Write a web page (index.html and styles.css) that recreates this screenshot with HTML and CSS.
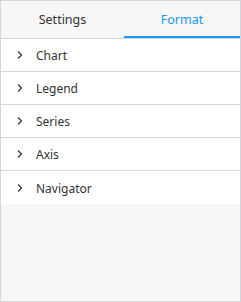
FILE: index.html
```html
<!DOCTYPE html>
<html lang="en">

<head>
  <meta charset="UTF-8" />
  <title>Chart Properties</title>
  <link rel="stylesheet" href="styles.css">
</head>

<body>
  <div class="panel">
    <div class="tabs">
      <div class="tab settings-tab">Settings</div>
      <div class="tab active">Format</div>
    </div>

    <div class="sections">
      <div class="section">
        <svg class="chevron" viewBox="0 0 8 10"><path d="M2 1.5 L5.5 5 L2 8.5" /></svg>
        <span>Chart</span>
      </div>
      <div class="section">
        <svg class="chevron" viewBox="0 0 8 10"><path d="M2 1.5 L5.5 5 L2 8.5" /></svg>
        <span>Legend</span>
      </div>
      <div class="section">
        <svg class="chevron" viewBox="0 0 8 10"><path d="M2 1.5 L5.5 5 L2 8.5" /></svg>
        <span>Series</span>
      </div>
      <div class="section">
        <svg class="chevron" viewBox="0 0 8 10"><path d="M2 1.5 L5.5 5 L2 8.5" /></svg>
        <span>Axis</span>
      </div>
      <div class="section">
        <svg class="chevron" viewBox="0 0 8 10"><path d="M2 1.5 L5.5 5 L2 8.5" /></svg>
        <span>Navigator</span>
      </div>
    </div>
  </div>
</body>

</html>
```

FILE: styles.css
```css
:root {
  --border-color: #d4d6da;
  --panel-bg: #f7f7f7;
  --text-color: #333;
  --accent-color: #2196f3;
}

html,
body {
  margin: 0;
  height: 100%;
}

body {
  font-family: 'Noto Sans', 'Open Sans', sans-serif;
  font-size: 12px;
  color: var(--text-color);
}

.panel {
  box-sizing: border-box;
  height: 302px;
  width: 241px;
  border: 1px solid var(--border-color);
  background-color: var(--panel-bg);
}

.tabs {
  display: flex;
  height: 37px;
  border-bottom: 1px solid var(--border-color);
}

.tab {
  flex: 1;
  display: flex;
  align-items: center;
  justify-content: center;
  box-sizing: border-box;
  border-bottom: 2px solid transparent;
  padding-top: 1px;
  font-size: 12.5px;
}

.settings-tab {
  flex: 0 0 123px;
}

.tab.active {
  color: var(--accent-color);
  border-bottom-color: var(--accent-color);
}

.sections {
  background-color: #fff;
}

.section {
  display: flex;
  align-items: center;
  height: 32px;
  padding-left: 15px;
  border-bottom: 1px solid var(--border-color);
}

.section:last-child {
  border-bottom: none;
  height: 33px;
}

.chevron {
  width: 8px;
  height: 10px;
  margin-right: 12px;
  fill: none;
  stroke: #333;
  stroke-width: 1.2;
}

.section span {
  padding-top: 1px;
}
```
